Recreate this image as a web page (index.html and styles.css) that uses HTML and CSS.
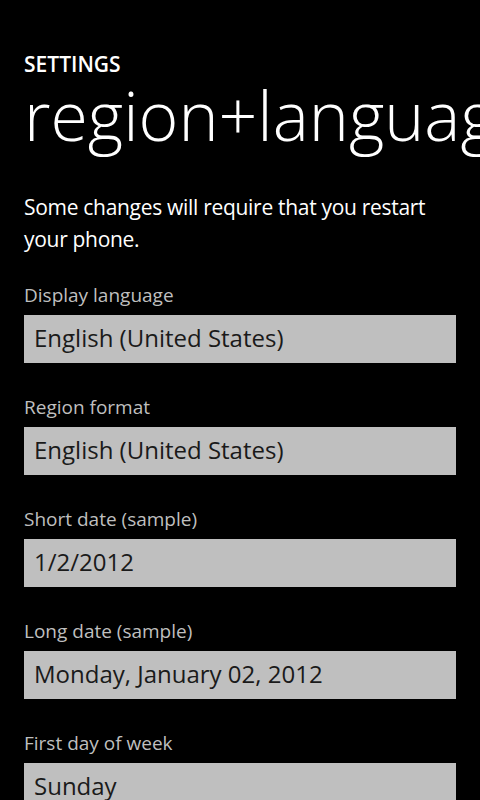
FILE: index.html
```html
<!DOCTYPE html>
<html lang="en">
<head>
<meta charset="utf-8">
<title>region+language</title>
<link rel="stylesheet" href="styles.css">
</head>
<body>
<div class="page">
  <header class="header">
    <div class="app-title">SETTINGS</div>
    <h1 class="page-title">region+language</h1>
  </header>
  <p class="note">Some changes will require that you restart your phone.</p>
  <div class="fields">
    <div class="field">
      <div class="label">Display language</div>
      <div class="picker">English (United States)</div>
    </div>
    <div class="field">
      <div class="label">Region format</div>
      <div class="picker">English (United States)</div>
    </div>
    <div class="field">
      <div class="label">Short date (sample)</div>
      <div class="picker">1/2/2012</div>
    </div>
    <div class="field">
      <div class="label">Long date (sample)</div>
      <div class="picker">Monday, January 02, 2012</div>
    </div>
    <div class="field">
      <div class="label">First day of week</div>
      <div class="picker">Sunday</div>
    </div>
  </div>
</div>
</body>
</html>
```

FILE: styles.css
```css
html, body {
  margin: 0;
  padding: 0;
  background: #000;
  width: 480px;
  height: 800px;
  overflow: hidden;
}
body {
  font-family: "Open Sans", "Noto Sans", sans-serif;
  color: #fff;
}
.page {
  padding: 53px 24px 0 24px;
}
.header {
  white-space: nowrap;
}
.app-title {
  font-size: 21px;
  font-weight: 600;
  line-height: 22px;
}
.page-title {
  margin: 4px 0 0 0;
  font-size: 68px;
  font-weight: 300;
  line-height: 72px;
  letter-spacing: 0;
  white-space: nowrap;
}
.note {
  margin: 40px 0 0 0;
  font-size: 21px;
  letter-spacing: -0.3px;
  line-height: 32px;
}
.fields {
  margin-top: 26px;
  display: flex;
  flex-direction: column;
  gap: 30px;
}
.field {
  display: flex;
  flex-direction: column;
  gap: 6px;
}
.label {
  font-size: 19px;
  line-height: 28px;
  color: #bfbfbf;
}
.picker {
  background: #bfbfbf;
  color: #1a1a1a;
  height: 48px;
  box-sizing: border-box;
  padding: 0 10px 3px 10px;
  font-size: 24px;
  line-height: 45px;
}
```
